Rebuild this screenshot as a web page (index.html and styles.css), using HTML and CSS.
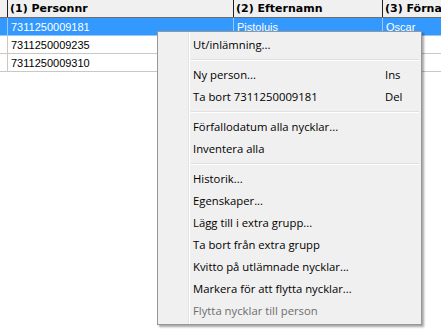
FILE: index.html
```html
<!DOCTYPE html>
<html lang="sv">
<head>
    <meta charset="UTF-8">
    <title>Personer</title>
    <link rel="stylesheet" href="styles.css">
</head>
<body>
    <div class="grid">
        <div class="row head">
            <div class="cell stub"></div>
            <div class="cell c1">(1) Personnr</div>
            <div class="cell c2">(2) Efternamn</div>
            <div class="cell c3">(3) Förnamn</div>
        </div>
        <div class="row selected">
            <div class="cell stub"></div>
            <div class="cell c1">7311250009181</div>
            <div class="cell c2">Pistoluis</div>
            <div class="cell c3">Oscar</div>
        </div>
        <div class="row">
            <div class="cell stub"></div>
            <div class="cell c1">7311250009235</div>
            <div class="cell c2"></div>
            <div class="cell c3"></div>
        </div>
        <div class="row">
            <div class="cell stub"></div>
            <div class="cell c1">7311250009310</div>
            <div class="cell c2"></div>
            <div class="cell c3"></div>
        </div>
    </div>

    <div class="menu">
        <div class="item">Ut/inlämning...</div>
        <div class="sep"></div>
        <div class="item"><span>Ny person...</span><span class="key">Ins</span></div>
        <div class="item"><span>Ta bort 7311250009181</span><span class="key">Del</span></div>
        <div class="sep"></div>
        <div class="item">Förfallodatum alla nycklar...</div>
        <div class="item">Inventera alla</div>
        <div class="sep"></div>
        <div class="item">Historik...</div>
        <div class="item">Egenskaper...</div>
        <div class="item">Lägg till i extra grupp...</div>
        <div class="item">Ta bort från extra grupp</div>
        <div class="item">Kvitto på utlämnade nycklar...</div>
        <div class="item">Markera för att flytta nycklar...</div>
        <div class="item disabled">Flytta nycklar till person</div>
    </div>
</body>
</html>
```

FILE: styles.css
```css
body {
    margin: 0;
    background: #fff;
    font-family: "Liberation Sans", Arial, sans-serif;
    font-size: 11px;
    overflow: hidden;
}
.grid {
    display: flex;
    flex-direction: column;
}
.row {
    display: flex;
    height: 17px;
    border-bottom: 1px solid #c8c8c8;
}
.cell {
    box-sizing: border-box;
    height: 17px;
    line-height: 18px;
    padding-left: 3px;
    border-right: 1px solid #c8c8c8;
    white-space: nowrap;
    overflow: hidden;
    flex-shrink: 0;
}
.stub {
    width: 8px;
    padding: 0;
}
.c1 {
    width: 226px;
}
.c2 {
    width: 149px;
}
.c3 {
    width: 120px;
}
.head {
    background: #f0f0f0;
    border-bottom: 1px solid #6d6d6d;
}
.head .cell {
    font-family: "DejaVu Sans", Verdana, sans-serif;
    font-weight: bold;
    padding-left: 2px;
    border-right-color: #202020;
}
.selected {
    background: #3399ff;
    color: #fff;
    border-bottom-color: #9cc8f5;
}
.selected .cell {
    border-right-color: #9cc8f5;
}

.menu {
    position: absolute;
    left: 157px;
    top: 31px;
    width: 263px;
    padding: 2px 0;
    background: #f0f0f0 linear-gradient(to right, transparent 30px, #e2e3e3 30px, #e2e3e3 31px, #fff 31px, #fff 32px, transparent 32px);
    border: 1px solid #979797;
    box-shadow: 2px 2px 2px rgba(0, 0, 0, 0.35);
    font-family: "Open Sans", "Noto Sans", sans-serif;
    font-size: 11.3px;
    color: #000;
}
.item {
    display: flex;
    justify-content: space-between;
    height: 22px;
    line-height: 22px;
    padding-left: 35px;
    padding-right: 19px;
}
.key {
    width: 17px;
}
.disabled {
    color: #6d6d6d;
}
.sep {
    height: 8px;
    margin-left: 33px;
    margin-right: 2px;
    background: linear-gradient(to bottom, transparent 3px, #e0e0e0 3px, #e0e0e0 4px, #fff 4px, #fff 5px, transparent 5px);
}
```
